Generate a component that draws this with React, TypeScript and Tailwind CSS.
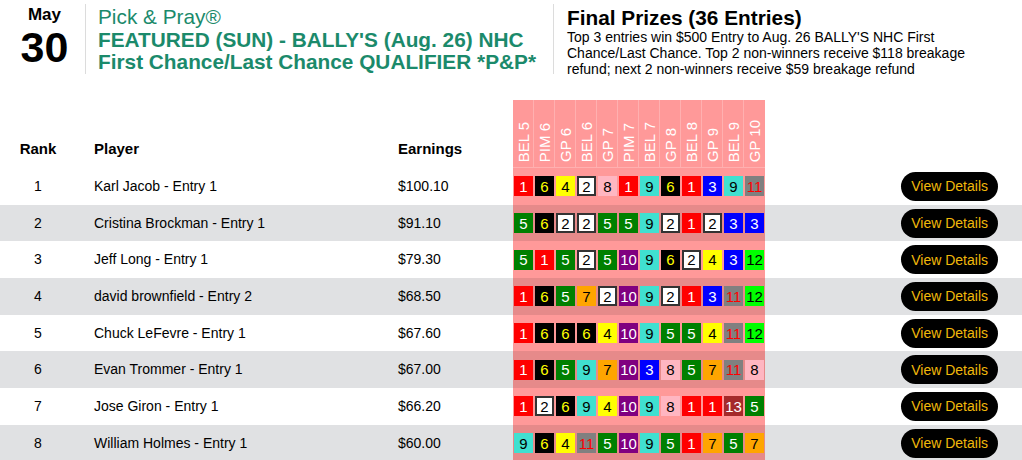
import React from "react";

const races = ["BEL 5", "PIM 6", "GP 6", "BEL 6", "GP 7", "PIM 7", "BEL 7", "GP 8", "BEL 8", "GP 9", "BEL 9", "GP 10"];

const rows: { name: string; earn: string; picks: number[] }[] = [
  { name: "Karl Jacob - Entry 1", earn: "$100.10", picks: [1, 6, 4, 2, 8, 1, 9, 6, 1, 3, 9, 11] },
  { name: "Cristina Brockman - Entry 1", earn: "$91.10", picks: [5, 6, 2, 2, 5, 5, 9, 2, 1, 2, 3, 3] },
  { name: "Jeff Long - Entry 1", earn: "$79.30", picks: [5, 1, 5, 2, 5, 10, 9, 6, 2, 4, 3, 12] },
  { name: "david brownfield - Entry 2", earn: "$68.50", picks: [1, 6, 5, 7, 2, 10, 9, 2, 1, 3, 11, 12] },
  { name: "Chuck LeFevre - Entry 1", earn: "$67.60", picks: [1, 6, 6, 6, 4, 10, 9, 5, 5, 4, 11, 12] },
  { name: "Evan Trommer - Entry 1", earn: "$67.00", picks: [1, 6, 5, 9, 7, 10, 3, 8, 5, 7, 11, 8] },
  { name: "Jose Giron - Entry 1", earn: "$66.20", picks: [1, 2, 6, 9, 4, 10, 9, 8, 1, 1, 13, 5] },
  { name: "William Holmes - Entry 1", earn: "$60.00", picks: [9, 6, 4, 11, 5, 10, 9, 5, 1, 7, 5, 7] },
];

const cellStyle: Record<number, string> = {
  1: "bg-[#ff0000] text-white",
  2: "bg-white text-black border-2 border-[#333333]",
  3: "bg-[#0000ff] text-white",
  4: "bg-[#ffff00] text-black",
  5: "bg-[#008000] text-white",
  6: "bg-black text-[#ffff00]",
  7: "bg-[#ffa500] text-black",
  8: "bg-[#ffb6c1] text-black",
  9: "bg-[#40e0d0] text-black",
  10: "bg-[#800080] text-white",
  11: "bg-[#808080] text-[#ff0000]",
  12: "bg-[#00ff00] text-black",
  13: "bg-[#a52a2a] text-white",
};

export default function App() {
  return (
    <div className="w-[1022px] h-[460px] overflow-hidden bg-white text-black font-['Liberation_Sans',Arial,sans-serif]">
      {/* Header */}
      <div className="flex h-[78px] pt-[4px]">
        <div className="w-[86px] pl-[4px] flex flex-col items-center border-r border-[#dcdcdc] h-[70px]">
          <div className="text-[17px] font-bold leading-[20px] mt-[1px]">May</div>
          <div className="text-[43px] font-bold leading-[43px] mt-[1px]">30</div>
        </div>
        <div className="w-[468px] pl-[12px] pt-[2px] border-r border-[#dcdcdc] h-[70px] text-[#1b8a6b] text-[20.8px] leading-[22.5px]">
          <div>Pick &amp; Pray®</div>
          <div className="font-bold">FEATURED (SUN) - BALLY'S (Aug. 26) NHC</div>
          <div className="font-bold">First Chance/Last Chance QUALIFIER *P&amp;P*</div>
        </div>
        <div className="pl-[13px] pt-[2px]">
          <div className="text-[20.8px] font-bold leading-[23px]">Final Prizes (36 Entries)</div>
          <div className="text-[14px] leading-[16px] w-[420px]">
            Top 3 entries win $500 Entry to Aug. 26 BALLY'S NHC First Chance/Last Chance. Top 2 non-winners receive $118 breakage refund; next 2 non-winners receive $59 breakage refund
          </div>
        </div>
      </div>

      {/* Table */}
      <div className="mt-[22px]">
        <div className="flex h-[68px] items-end text-[15px] font-bold">
          <div className="w-[76px] text-center pb-[8px]">Rank</div>
          <div className="w-[322px] pl-[18px] pb-[8px]">Player</div>
          <div className="w-[115px] pb-[8px]">Earnings</div>
          <div className="w-[252px] h-[68px] flex bg-[#ff9999] border-b border-[#ffb0b0]">
            {races.map((r, i) => (
              <div
                key={r}
                className={
                  "w-[21px] h-full flex flex-col justify-end items-center pb-[5px] " +
                  (i < races.length - 1 ? "border-r border-[#ffb0b0]" : "")
                }
              >
                <span className="[writing-mode:vertical-rl] rotate-180 whitespace-nowrap text-white font-normal text-[15px] leading-[17px]">
                  {r}
                </span>
              </div>
            ))}
          </div>
          <div className="flex-1" />
        </div>

        {rows.map((row, idx) => {
          const gray = idx % 2 === 1;
          return (
            <div key={idx} className={"flex items-center h-[36.7px] text-[14px] " + (gray ? "bg-[#e0e1e3]" : "bg-white")}>
              <div className="w-[76px] text-center">{idx + 1}</div>
              <div className="w-[322px] pl-[18px]">{row.name}</div>
              <div className="w-[115px]">{row.earn}</div>
              <div className={"w-[252px] h-full flex items-center " + (gray ? "bg-[#e68a8a]" : "bg-[#ff9999]")}>
                {row.picks.map((p, j) => (
                  <div key={j} className="w-[21px] flex justify-center">
                    <div
                      className={
                        "w-[19px] h-[20px] flex items-center justify-center text-[15px] leading-none box-border " +
                        cellStyle[p]
                      }
                    >
                      {p}
                    </div>
                  </div>
                ))}
              </div>
              <div className="flex-1 flex justify-end pr-[24px]">
                <button className="h-[29px] px-[10px] rounded-full bg-black text-[#f0b90b] text-[14px] leading-none">
                  View Details
                </button>
              </div>
            </div>
          );
        })}
      </div>
    </div>
  );
}
